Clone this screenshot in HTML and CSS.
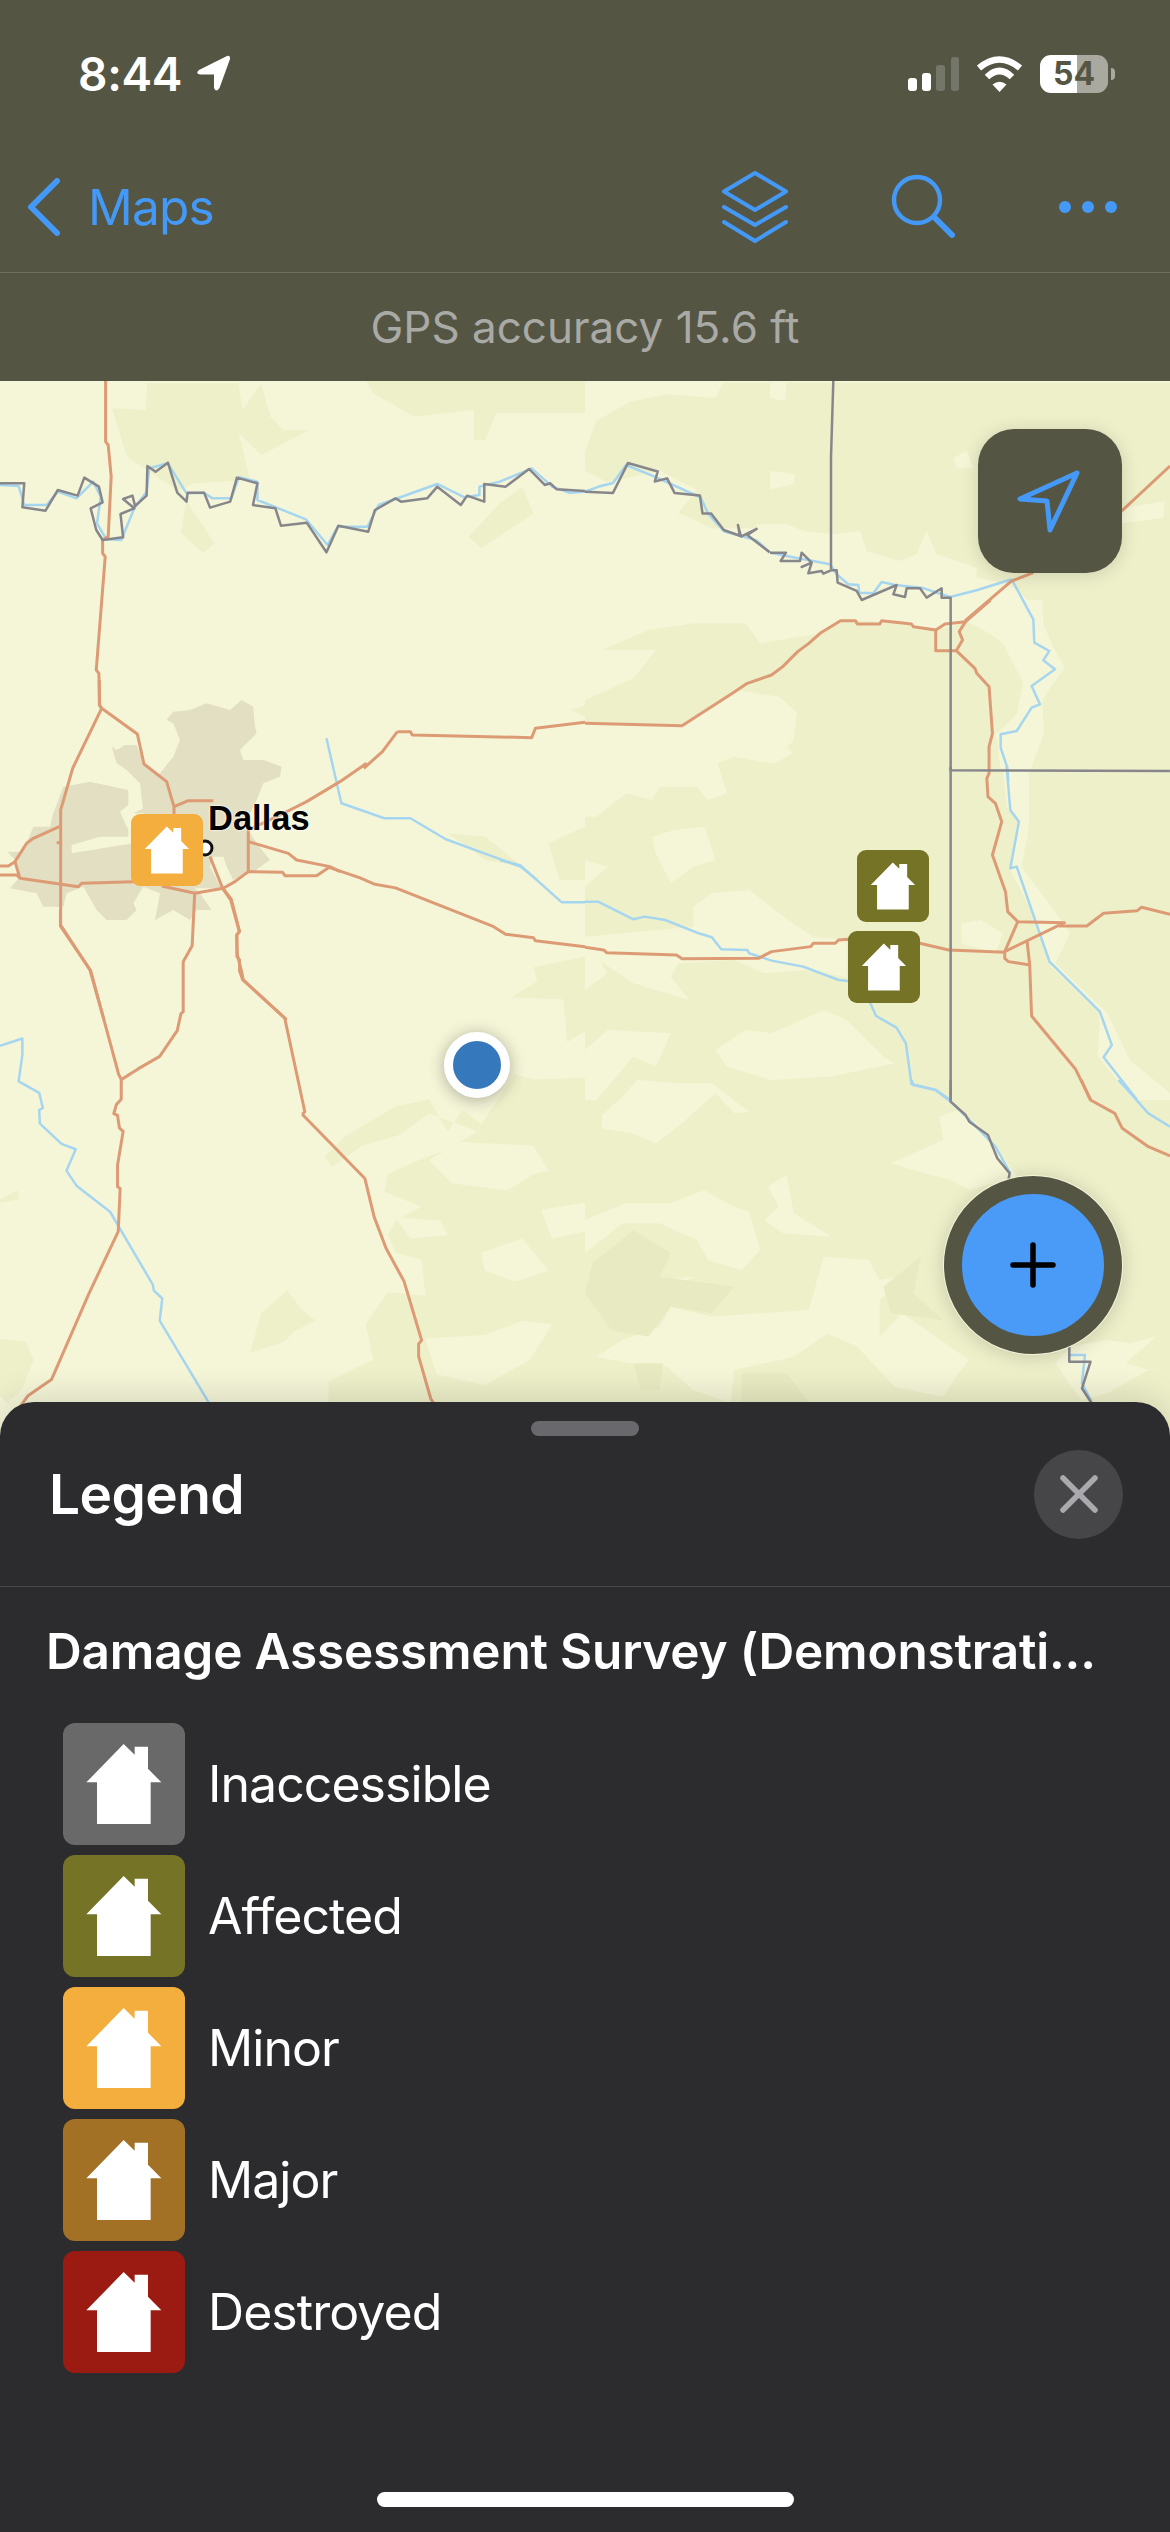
FILE: index.html
```html
<!DOCTYPE html>
<html lang="en">
<head>
  <meta charset="UTF-8"/>
  <meta name="viewport" content="width=device-width, initial-scale=1.0"/>
  <title>Legend</title>
  <link rel="stylesheet" href="styles.css">
</head>
<body>
  <svg class="defs" width="0" height="0">
    <symbol id="house" viewBox="0 0 366 366">
      <path d="M182 63 L215 95 L215 71 L255 71 L255 137 L295 178 L263 178 L263 303 L102 303 L102 178 L70 178 Z"/>
    </symbol>
  </svg>

  <!-- Top bars -->
  <header class="top">
    <div class="status">
      <div class="status-left">
        <span class="time">8:44</span>
        <svg class="loc" width="35" height="37" viewBox="0 0 35 37"><path d="M31 1 L3 15 Q-1 19 4 19.500 L18 19.500 L18 33 Q20 38 23.500 33 L34 4 Q34.500 0 31 1Z"/></svg>
      </div>
      <div class="status-right">
        <svg width="51" height="34" viewBox="0 0 51 34">
          <rect x="0" y="21" width="9" height="13" rx="3" fill="#fff"/>
          <rect x="14" y="16" width="9" height="18" rx="3" fill="#fff"/>
          <rect x="28" y="8" width="9" height="26" rx="3" fill="#75766a"/>
          <rect x="43" y="0" width="8" height="34" rx="3" fill="#75766a"/>
        </svg>
        <svg width="47" height="36" viewBox="0 0 47 36" fill="none" stroke="#fff" stroke-width="6.500">
          <path d="M3 12 Q23.500 -5 44 12"/>
          <path d="M11 21 Q23.500 9 36 21"/>
          <path d="M16.500 28.500 Q23.500 23 30.500 28.500 L23.500 36Z" fill="#fff" stroke="none"/>
        </svg>
        <div class="battery">54</div>
      </div>
    </div>

    <nav class="navbar">
      <a class="back">
        <svg width="34" height="58" viewBox="0 0 34 58" fill="none" stroke="#4499f7" stroke-width="6" stroke-linecap="round" stroke-linejoin="round"><path d="M30 3 L4 29 L30 55"/></svg>
        <span>Maps</span>
      </a>
      <div class="nav-icons">
        <svg width="68" height="74" viewBox="0 0 68 74" fill="none" stroke="#4499f7" stroke-width="4" stroke-linecap="round" stroke-linejoin="round">
          <path d="M34 3 L65 21.500 L34 40 L3 21.500 Z"/>
          <path d="M3 37 L34 55 L65 37"/>
          <path d="M3 52 L34 71 L65 52"/>
        </svg>
        <svg width="64" height="66" viewBox="0 0 64 66" fill="none" stroke="#4499f7" stroke-linecap="round">
          <circle cx="26" cy="26" r="23" stroke-width="4.500"/>
          <path d="M44 44 L61 61" stroke-width="6"/>
        </svg>
        <svg class="dots" width="58" height="12" viewBox="0 0 58 12" fill="#4499f7">
          <circle cx="6" cy="6" r="6"/><circle cx="29" cy="6" r="6"/><circle cx="52" cy="6" r="6"/>
        </svg>
      </div>
    </nav>

    <div class="gps">GPS accuracy 15.6 ft</div>
  </header>

  <!-- Map -->
  <main class="map">
    <svg class="basemap" width="1170" height="1059" viewBox="0 381 1170 1059">
      <!-- vegetation -->
      <g class="veg">
        <path d="M585 1095 H1170 V1440 H585 Z"/>
        <g transform="translate(0 380) scale(.3731 .3333)">
          <path d="M300 85 L390 90 L395 10 L640 10 L650 90 L700 10 L725 110 L760 150 L830 150 L700 225 L640 160 L670 300 L520 310 L480 330 L575 490 L545 520 L485 460 L500 350 L340 230 Z"/>
          <path d="M980 0 L1568 0 L1568 100 L1330 100 L1300 180 L1270 180 L1270 90 L1110 110 L1000 40 Z"/>
          <path d="M1255 470 L1340 370 L1400 320 L1430 400 L1290 505 Z"/>
          <path d="M1200 1360 L1300 1370 L1400 1460 L1300 1440 Z"/>
          <path d="M1470 1390 L1568 1340 L1568 1500 L1500 1500 Z"/>
          <path d="M1530 990 L1568 975 L1568 1010 Z"/>
        </g>
        <g transform="translate(0 860) scale(.3731 .3571)">
          <path d="M670 1380 L700 1270 L770 1205 L810 1260 L845 1290 L790 1320 L760 1350 Z"/>
          <path d="M0 950 L50 925 L50 950 L0 960 Z"/>
          <path d="M0 1340 L70 1350 L90 1400 L60 1480 L20 1520 L0 1500 Z"/>
          <path d="M1568 270 L1430 300 L1440 340 L1370 385 L1510 390 L1520 510 L1568 480 Z"/>
          <path d="M1568 610 L1430 615 L1380 600 L1290 740 L1240 700 L1200 760 L1150 670 L1060 690 L930 770 L900 800 L870 830 L890 860 L970 800 L1070 770 L1150 710 L1280 760 L1200 810 L1100 850 L1040 880 L1030 930 L1130 970 L1060 1010 L1040 1050 L1060 1100 L1130 1120 L1140 1220 L1040 1210 L980 1300 L1000 1400 L880 1460 L880 1600 L1568 1600 Z"/>
        </g>
        <g transform="translate(585 600) scale(.3731 .3333)">
          <path d="M0 650 L30 650 L110 580 L180 600 L200 560 L300 560 L330 600 L380 580 L355 490 L400 470 L450 480 L510 490 L555 460 L530 420 L570 340 L520 290 L400 270 L300 350 L260 380 L0 370 L0 300 L130 235 L190 150 L45 150 L170 90 L290 70 L430 70 L470 130 L630 100 L690 60 L875 70 L940 90 L1040 60 L1120 130 L1190 0 L1568 0 L1568 1500 L0 1500 L0 1170 L60 1120 L0 1010 L0 860 L60 800 L0 780 Z"/>
        </g>
        <g transform="translate(585 0) scale(.3731 .3827)">
          <path d="M370 1000 L1568 1000 L1568 1568 L1000 1568 L800 1500 L660 1490 L600 1430 L500 1380 L340 1380 L250 1340 L300 1280 L200 1230 L60 1260 L0 1230 L0 1180 L30 1100 L120 1050 L220 1030 L350 1040 Z"/>
        </g>
      </g>
      <!-- lighter clearings inside the vegetation -->
      <g class="lite">
        <g transform="translate(0 860) scale(.3731 .3571)">
          <path d="M1150 840 L1210 905 L1360 925 L1430 880 L1470 870 L1430 800 L1230 790 Z"/>
          <path d="M1290 1100 L1400 1060 L1470 1150 L1380 1180 L1300 1150 Z"/>
          <path d="M1140 1340 L1300 1330 L1400 1290 L1480 1300 L1420 1400 L1300 1470 L1170 1440 Z"/>
          <path d="M1060 1000 L1180 1010 L1200 1050 L1100 1060 Z"/>
          <path d="M1450 980 L1568 960 L1568 1040 L1480 1060 Z"/>
        </g>
        <g transform="translate(770 381) scale(.3333)">
          <path d="M-40 430 L50 430 L100 450 L190 460 L270 450 L290 510 L390 540 L440 520 L470 450 L500 520 L620 560 L620 590 L720 610 L800 680 L850 800 L885 860 L840 920 L800 990 L740 1050 L720 1160 L692 1160 L680 1060 L740 1000 L760 900 L740 820 L680 770 L590 720 L520 730 L430 740 L380 690 L200 670 L100 640 L-40 600 Z"/>
          <path d="M0 950 L80 1000 L70 1080 L0 1150 Z"/>
          <path d="M550 230 L590 210 L610 260 L560 260 Z"/>
          <path d="M0 270 L75 280 L70 310 L0 325 Z"/>
          <path d="M1070 380 L1185 360 L1180 410 L1040 430 Z"/>
          <path d="M0 0 L50 0 L45 60 L0 50 Z"/>
        </g>
        <g transform="translate(585 600) scale(.3731 .3333)">
          <path d="M1040 60 L1100 80 L1190 0 L1225 0 L1230 100 L1265 200 L1225 300 L1230 400 L1190 520 L1190 680 L1170 800 L1250 920 L1300 1000 L1260 1090 L1400 1240 L1460 1380 L1568 1480 L1568 1500 L1470 1500 L1375 1370 L1380 1240 L1250 1100 L1210 960 L1140 810 L1160 660 L1130 620 L1120 500 L1100 400 L1150 380 L1190 310 L1180 260 L1120 130 Z"/>
          <path d="M0 1010 L100 1000 L290 980 L290 920 L340 880 L440 870 L520 940 L610 1010 L700 1020 L700 1130 L590 1110 L480 1120 L400 1080 L250 1090 L230 1130 L280 1200 L130 1150 L50 1090 L0 1080 Z"/>
          <path d="M180 710 L240 690 L320 680 L350 780 L290 800 L230 850 L190 760 Z"/>
          <path d="M350 1350 L430 1290 L500 1300 L640 1230 L700 1260 L800 1370 L830 1390 L660 1430 L500 1440 L380 1400 Z"/>
          <path d="M30 1500 L130 1370 L190 1400 L230 1300 L60 1290 L0 1350 L0 1500 Z"/>
          <path d="M1010 970 L1060 960 L1120 1000 L1100 1060 L1010 1030 Z"/>
        </g>
        <g transform="translate(585 1080) scale(.3731 .3333)">
          <path d="M820 250 L900 210 L960 180 L950 110 L1000 90 L1050 130 L1100 200 L1160 290 L1030 330 L980 300 L880 270 Z"/>
          <path d="M340 710 L600 690 L640 530 L760 540 L790 600 L850 590 L790 660 L790 770 L850 700 L940 770 L1030 840 L1000 880 L960 950 L830 920 L730 800 L650 760 L560 830 L400 870 L390 970 L290 930 L220 860 L120 850 L30 830 L100 780 L200 740 L230 680 Z"/>
          <path d="M0 420 L110 370 L230 370 L320 330 L390 375 L440 395 L470 510 L420 570 L330 540 L300 480 L200 430 L100 430 L0 520 Z"/>
          <path d="M490 320 L540 285 L560 400 L660 470 L530 460 L480 420 L520 380 Z"/>
          <path d="M45 105 L100 50 L140 0 L250 10 L340 10 L440 95 L400 100 L350 40 L260 130 L190 190 L130 160 L45 145 Z"/>
          <path d="M1300 800 L1400 780 L1460 790 L1530 770 L1450 850 L1510 870 L1400 940 L1330 960 L1260 850 Z"/>
          <path d="M110 580 L220 600 L290 590 L210 650 L170 620 Z"/>
        </g>
      </g>
      <g class="veg2" transform="translate(585 1080) scale(.3731 .3333)">
        <path d="M20 550 L130 450 L230 520 L200 590 L400 620 L340 700 L230 680 L170 770 L70 750 L0 640 Z"/>
        <path d="M130 850 L210 850 L200 930 L150 930 Z"/>
        <path d="M800 620 L900 530 L880 640 L960 720 L820 700 Z"/>
        <path d="M420 880 L540 880 L600 965 L420 965 Z"/>
      </g>

      <!-- built-up area -->
      <g class="urban" transform="translate(0 680) scale(.3333)">
        <path d="M500 120 L520 95 L570 90 L620 70 L690 90 L725 60 L760 80 L765 140 L770 160 L720 210 L730 240 L790 240 L845 260 L840 290 L790 310 L770 360 L750 400 L745 450 L770 490 L810 540 L760 575 L700 600 L680 560 L670 530 L640 530 L630 560 L665 625 L590 625 L480 600 L430 400 L420 310 L480 280 L520 230 L540 180 L520 130 Z"/>
        <path d="M335 200 L350 210 L375 195 L410 195 L432 250 L500 305 L440 310 L420 310 L380 270 L350 250 Z"/>
        <path d="M420 310 L500 305 L522 400 L400 400 L440 380 Z"/>
        <path d="M190 320 L270 305 L385 330 L385 375 L360 395 L385 450 L385 470 L300 470 L215 495 L215 520 L400 490 L400 620 L240 610 L60 590 L50 545 L22 515 L60 515 L80 490 L100 440 L150 440 L160 400 L175 360 Z"/>
        <path d="M30 625 L110 640 L130 680 L190 680 L200 640 L250 620 L290 690 L320 720 L380 720 L410 690 L400 670 L430 620 L480 640 L465 720 L520 690 L570 720 L590 690 L635 690 L600 640 L560 600 L60 590 Z"/>
      </g>

      <!-- rivers -->
      <g class="river">
        <path transform="translate(0 380) scale(.3731 .3333)" d="M0 315 L50 318 L65 375 L125 375 L155 335 L205 355 L250 305 L270 350 L260 430 L285 478 L325 480 L360 385 L393 335 L400 265 L450 250 L500 340 L545 338 L570 355 L620 355 L640 292 L690 305 L690 360 L820 418 L878 495 L905 440 L985 440 L1015 375 L1172 312 L1245 352 L1285 345 L1285 320 L1340 305 L1425 265 L1480 320 L1525 338 L1568 335"/>
        <path transform="translate(585 0) scale(.3731 .3827)" d="M0 1285 L35 1272 L75 1262 L110 1215 L185 1245 L310 1300 L330 1342 L372 1388 L460 1412 L495 1443"/>
        <path transform="translate(770 381) scale(.3333)" d="M0 515 L50 525 L180 550 L200 580 L235 610 L265 612 L268 635 L310 637 L335 603 L375 612 L455 620 L540 648 L620 628 L725 595"/>
        <path transform="translate(770 381) scale(.3333)" d="M725 595 L790 715 L793 785 L838 810 L820 838 L855 865 L785 915 L810 970 L785 980 L740 1050 L692 1060 L692 1100 L712 1160 L715 1200"/>
        <path transform="translate(585 600) scale(.3731 .3333)" d="M1130 500 L1140 630 L1163 665 L1140 805 L1157 800 L1245 1085 L1380 1235 L1412 1335 L1390 1372 L1480 1500"/>
        <path transform="translate(585 1080) scale(.3731 .3333)" d="M1430 0 L1510 100 L1568 140"/>
        <path transform="translate(0 380) scale(.3731 .3333)" d="M875 1075 L915 1270 L1030 1315 L1100 1315 L1195 1378 L1395 1460 L1440 1500"/>
        <path transform="translate(0 860) scale(.3731 .3571)" d="M1340 0 L1395 15 L1505 118 L1568 118"/>
        <path transform="translate(585 600) scale(.3731 .3333)" d="M0 905 L35 905 L130 958 L160 950 L215 960 L305 1000 L340 1012 L365 1048 L435 1050 L440 1060 L500 1082 L585 1100 L680 1140 L705 1143 L765 1210 L780 1248 L835 1283 L860 1330 L875 1452 L940 1470 L980 1500"/>
        <path transform="translate(585 1080) scale(.3731 .3333)" d="M875 0 L880 15 L940 30 L980 65 L1040 130 L1100 200 L1140 280"/>
        <path transform="translate(585 1080) scale(.3731 .3333)" d="M1298 825 L1340 825 L1332 910 L1358 965"/>
        <path transform="translate(0 860) scale(.3731 .3571)" d="M0 520 L60 500 L60 545 L50 620 L105 652 L115 695 L105 700 L107 738 L165 795 L203 810 L178 870 L205 912 L295 985 L410 1190 L412 1205 L435 1228 L428 1290 L560 1520"/>
      </g>

      <!-- roads -->
      <g class="road">
        <g transform="translate(0 380) scale(.3731 .3333)">
          <path d="M283 0 L283 185 L290 195 L298 290 L290 470 L275 480 L275 520 L282 530 L258 870 L265 880 L267 975 L272 985"/>
          <path d="M1065 1055 L1100 1055 L1105 1065 L1425 1073 L1435 1045 L1568 1027"/>
          <path d="M975 1165 L1025 1115 L1065 1055"/>
        </g>
        <g transform="translate(0 680) scale(.3333)">
          <path d="M298 0 L298 75 L305 85 L412 162 L432 252 L500 305 L522 380 L522 405"/>
          <path d="M305 85 L218 265 L182 390 L182 735 L270 870 L312 1020"/>
          <path d="M522 380 L565 362 L640 362"/>
          <path d="M745 450 L745 575 L705 605 L670 625 L585 640 L485 618"/>
          <path d="M745 485 L865 520 L890 540 L990 560 L1020 575"/>
          <path d="M745 575 L848 577 L855 587 L950 587 L990 560"/>
          <path d="M630 530 L668 625 L692 660 L718 755 L710 765 L712 825 L725 875 L730 900 L860 1020"/>
          <path d="M0 558 L25 558 L45 545 L80 490 L100 475 L178 440"/>
          <path d="M0 585 L50 585 L60 595 L235 620 L245 610 L400 605"/>
          <path d="M45 545 L60 595"/>
          <path d="M745 450 L840 405 L920 365 L1020 305 L1100 250"/>
          <path d="M170 488 L182 488"/>
        </g>
        <g transform="translate(0 860) scale(.3731 .3571)">
          <path d="M162 140 L162 185 L243 310 L318 600 L325 615 L325 670 L312 685 L305 710 L315 715 L320 750 L330 760 L315 855 L315 915 L322 920 L317 1040 L238 1215 L138 1455 L75 1500 L55 1530"/>
          <path d="M325 615 L370 585 L428 550 L475 478 L485 430 L491 425 L491 285 L515 240 L522 90"/>
          <path d="M810 712 L978 892 L1003 1000 L1035 1088 L1083 1180 L1130 1345 L1122 1355 L1122 1390 L1155 1510 L1165 1525"/>
          <path d="M595 75 L620 110 L642 200 L635 210 L635 270 L642 280 L642 310 L650 335 L763 442 L817 705 L810 712"/>
          <path d="M880 20 L965 50 L1005 68 L1060 78 L1320 185 L1355 208 L1430 218 L1435 226 L1568 243"/>
        </g>
        <g transform="translate(585 600) scale(.3731 .3333)">
          <path d="M0 370 L260 377 L395 280 L435 250 L500 225 L530 200 L570 155 L600 130 L630 100 L685 62 L725 62 L730 72 L790 72 L795 62 L875 72 L880 80 L940 90 L940 152 L995 152 L1045 205 L1050 220 L1083 260 L1092 400 L1083 440 L1083 520 L1077 535 L1080 590 L1100 610 L1117 665 L1092 765 L1127 875 L1133 935 L1160 965 L1285 968 L1125 1055 L1125 1075 L1135 1085 L1192 1095 L1197 1248 L1315 1408 L1355 1500"/>
          <path d="M940 90 L965 72 L1020 65 L1087 0"/>
          <path d="M1020 65 L1003 95 L1012 120 L995 152"/>
          <path d="M1160 965 L1125 1055"/>
          <path d="M1185 1025 L1192 1095"/>
          <path d="M1270 978 L1345 978 L1390 940 L1480 932 L1492 922 L1568 943"/>
          <path d="M0 1042 L50 1050 L58 1058 L245 1065 L260 1076 L465 1075 L500 1055 L605 1040 L612 1030 L670 1030 L680 1020 L705 1018 L897 1030 L975 1050 L1125 1057"/>
        </g>
        <g transform="translate(770 381) scale(.3333)">
          <path d="M1200 255 L1055 390"/>
          <path d="M790 575 L725 600 L585 720"/>
        </g>
        <path transform="translate(585 1080) scale(.3731 .3333)" d="M1330 0 L1355 60 L1420 100 L1440 145 L1510 200 L1568 228"/>
      </g>

      <!-- state and county lines -->
      <g class="border">
        <path transform="translate(0 380) scale(.3731 .3333)" d="M0 310 L65 310 L60 382 L122 392 L155 330 L208 347 L226 293 L265 320 L275 367 L243 385 L258 450 L275 480 L330 472 L323 402 L360 385 L330 357 L355 347 L362 378 L393 347 L395 258 L417 275 L450 248 L475 338 L500 365 L503 338 L547 338 L563 383 L617 365 L635 293 L690 310 L678 375 L738 385 L753 437 L822 428 L875 517 L907 437 L987 455 L1005 390 L1060 355 L1075 365 L1145 355 L1172 320 L1235 375 L1252 347 L1298 365 L1298 312 L1355 320 L1418 267 L1460 315 L1475 310 L1492 328 L1568 333"/>
        <path transform="translate(585 0) scale(.3731 .3827)" d="M0 1285 L75 1288 L115 1210 L195 1232 L187 1258 L220 1250 L240 1288 L308 1295 L315 1342 L338 1342 L372 1385 L415 1400 L410 1372 L418 1402 L460 1382 L435 1398 L495 1443"/>
        <path transform="translate(770 381) scale(.3333)" d="M190 0 L183 230 L183 565"/>
        <path transform="translate(770 381) scale(.3333)" d="M0 515 L48 515 L32 540 L90 540 L95 515 L125 545 L95 558 L125 545 L115 577 L155 570 L160 578 L183 568 L200 568 L203 605 L260 630 L275 657 L380 612 L370 640 L405 648 L410 622 L450 622 L470 650 L515 622 L515 650 L542 650 L542 1168 L1200 1170"/>
        <path transform="translate(585 600) scale(.3731 .3333)" d="M980 500 L980 1500"/>
        <path transform="translate(585 1080) scale(.3731 .3333)" d="M980 0 L980 65 L1020 105 L1030 125 L1080 165 L1105 235 L1138 280 L1135 300"/>
        <path transform="translate(585 1080) scale(.3731 .3333)" d="M1298 800 L1298 845 L1355 845 L1332 925 L1358 970"/>
      </g>

      <circle cx="205" cy="848" r="7" fill="#fff" stroke="#111" stroke-width="3"/>
    </svg>

    <span class="city">Dallas</span>

    <div class="marker marker-dallas minor"><svg><use href="#house"/></svg></div>
    <div class="marker marker-east1 affected"><svg><use href="#house"/></svg></div>
    <div class="marker marker-east2 affected"><svg><use href="#house"/></svg></div>

    <div class="me"></div>

    <button class="locate">
      <svg width="144" height="144" viewBox="0 0 144 144" fill="none" stroke="#4499f7" stroke-width="5" stroke-linejoin="round"><path d="M99 44 L42 70 L69 72 L72 101 Z"/></svg>
    </button>

    <button class="fab">
      <svg width="48" height="48" viewBox="0 0 48 48" stroke="#000" stroke-width="5.500" stroke-linecap="round"><path d="M24 4 V44 M4 24 H44"/></svg>
    </button>
  </main>

  <!-- Legend sheet -->
  <section class="sheet">
    <div class="sheet-head">
      <div class="handle"></div>
      <div class="sheet-row">
        <h2>Legend</h2>
        <button class="close">
          <svg width="38" height="38" viewBox="0 0 38 38" stroke="#a9a9ae" stroke-width="5.500" stroke-linecap="round"><path d="M3 3 L35 35 M35 3 L3 35"/></svg>
        </button>
      </div>
    </div>

    <h3 class="survey">Damage Assessment Survey (Demonstrati...</h3>

    <ul class="legend">
      <li><div class="swatch inaccessible"><svg><use href="#house"/></svg></div>Inaccessible</li>
      <li><div class="swatch affected"><svg><use href="#house"/></svg></div>Affected</li>
      <li><div class="swatch minor"><svg><use href="#house"/></svg></div>Minor</li>
      <li><div class="swatch major"><svg><use href="#house"/></svg></div>Major</li>
      <li><div class="swatch destroyed"><svg><use href="#house"/></svg></div>Destroyed</li>
    </ul>

    <div class="home-bar"></div>
  </section>
</body>
</html>
```

FILE: styles.css
```css
/* Reset */
* { box-sizing: border-box; margin: 0; padding: 0; }
html, body { width: 1170px; height: 2532px; overflow: hidden; }
body {
  display: flex; flex-direction: column;
  font-family: Inter, 'Noto Sans', sans-serif;
  background: #2c2c2e; color: #fff;
}
button { border: none; cursor: pointer; }
.defs { position: absolute; }

/* Top bars */
.top { flex: 0 0 381px; background: #545543; }

.status {
  height: 148px;
  display: flex; align-items: center; justify-content: space-between;
  padding: 0 62px 0 78px;
}
.status-left { display: flex; align-items: center; gap: 14px; }
.time { font-size: 46px; font-weight: 600; letter-spacing: -.3px; }
.loc { fill: #fff; margin-top: -1px; }
.status-right { display: flex; align-items: center; gap: 17px; }
.battery {
  position: relative;
  width: 68px; height: 38px; border-radius: 11px;
  background: linear-gradient(90deg, #fff 54%, #a9a99f 54%);
  color: #545543; font-size: 32px; font-weight: 700;
  line-height: 38px; text-align: center;
}
.battery::after {
  content: ""; position: absolute;
  right: -7px; top: 13px;
  width: 4px; height: 12px;
  background: #a9a99f; border-radius: 0 6px 6px 0;
}

.navbar {
  height: 125px; padding: 0 53px 7px 27px;
  display: flex; align-items: center; justify-content: space-between;
  border-bottom: 1px solid #707161;
}
.back { display: flex; align-items: center; gap: 27px; color: #4499f7; font-size: 49.500px; letter-spacing: -.8px; }
.nav-icons { display: flex; align-items: center; gap: 102px; }
.dots { margin-left: 2px; }

.gps {
  height: 108px; line-height: 108px;
  text-align: center;
  font-size: 44px; color: #a9a9a6;
}

/* Map */
.map {
  flex: 0 0 1059px; position: relative;
  background: #f5f6d8; overflow: hidden;
}
.basemap { display: block; }
.basemap path { vector-effect: non-scaling-stroke; }
.veg path { fill: #eef0ca; }
.lite path { fill: #f5f6d8; }
.veg2 path { fill: #e8ebc2; }
.urban path { fill: #e2dfc2; }
.river path { fill: none; stroke: #a6d6ef; stroke-width: 2.500px; stroke-linejoin: round; }
.road path { fill: none; stroke: #dd9b75; stroke-width: 3px; stroke-linejoin: round; }
.border path { fill: none; stroke: #87878b; stroke-width: 2.500px; stroke-linejoin: round; }

.city {
  position: absolute; left: 208px; top: 418px;
  font: bold 34.500px 'Liberation Sans', Arial, sans-serif;
  line-height: 38px; color: #000;
  text-shadow: 0 0 2px #fff, 0 0 2px #fff;
}

.marker {
  position: absolute; width: 72px; height: 72px;
  border-radius: 9px;
}
.marker svg { display: block; width: 100%; height: 100%; fill: #fff; }
.marker-dallas { left: 131px; top: 433px; }
.marker-east1 { left: 857px; top: 469px; }
.marker-east2 { left: 848px; top: 550px; }

.me {
  position: absolute; left: 444px; top: 651px;
  width: 66px; height: 66px; border-radius: 50%;
  background: #3678bc; border: 9px solid #fff;
  box-shadow: 0 2px 16px rgba(0,0,0,.3);
}

.locate {
  position: absolute; left: 978px; top: 48px;
  width: 144px; height: 144px; border-radius: 36px;
  background: #545543;
  box-shadow: 0 2px 18px rgba(0,0,0,.14);
}
.locate svg { display: block; }

.fab {
  position: absolute; left: 944px; top: 795px;
  width: 178px; height: 178px; border-radius: 50%;
  background: #4a9af7; border: 18px solid #545543;
  display: flex; align-items: center; justify-content: center;
  box-shadow: 0 0 0 1px #f5f6d8, 0 2px 20px rgba(0,0,0,.18);
}

/* Legend sheet */
.sheet {
  flex: 1; position: relative;
  margin-top: -38px;
  background: #2c2c2e;
  border-radius: 34px 34px 0 0;
  box-shadow: 0 -4px 34px rgba(0,0,0,.14);
  display: flex; flex-direction: column;
}
.sheet-head { height: 185px; border-bottom: 1px solid #48484a; }
.handle {
  width: 108px; height: 15px; margin: 19px auto 0;
  background: #68686d; border-radius: 8px;
}
.sheet-row {
  height: 116px; padding: 0 47px 0 49px;
  display: flex; align-items: center; justify-content: space-between;
}
.sheet-row h2 { font-size: 55px; font-weight: 600; letter-spacing: -.6px; }
.close {
  width: 89px; height: 89px; border-radius: 50%;
  background: #464648;
  display: flex; align-items: center; justify-content: center;
}

.survey {
  margin-top: 34px; padding-left: 46px;
  font-size: 49.500px; font-weight: 600; line-height: 60px;
  letter-spacing: -.2px;
  white-space: nowrap;
}

.legend {
  list-style: none;
  margin: 42px 0 0 63px;
  display: flex; flex-direction: column; gap: 10px;
}
.legend li { display: flex; align-items: center; gap: 23px; font-size: 50px; letter-spacing: -.95px; }
.swatch { width: 122px; height: 122px; border-radius: 12px; }
.swatch svg { display: block; width: 100%; height: 100%; fill: #fff; }
.inaccessible { background: #696969; }
.affected { background: #757326; }
.minor { background: #f3ae3e; }
.major { background: #a27126; }
.destroyed { background: #9b1b12; }

.home-bar {
  width: 417px; height: 15px; margin: auto auto 25px;
  background: #fff; border-radius: 8px;
}
```
